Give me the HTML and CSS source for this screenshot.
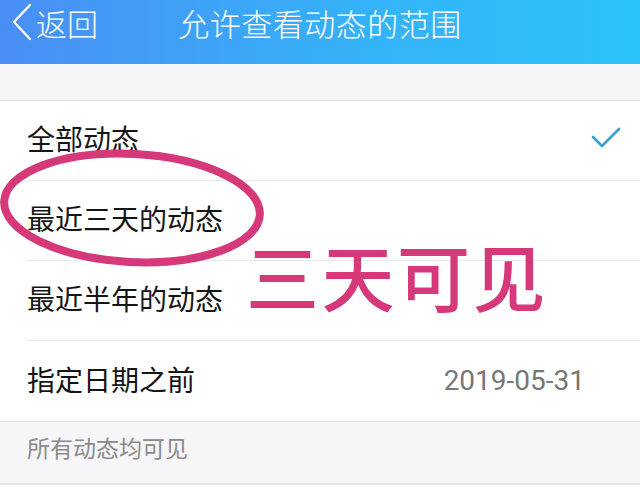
FILE: index.html
```html
<html>
  <head>
    <meta charset="UTF-8">
    <meta name="viewport" content="width=device-width, initial-scale=1">
    <title>允许查看动态的范围</title>
    <link rel="stylesheet" href="styles.css">
  </head>

  <body>
    <div class="nav-bar">
      <div class="nav-back">
        <svg class="nav-back-icon" width="22" height="38" viewBox="0 0 22 38">
          <polyline points="19,2 3,19 19,36" fill="none" stroke="white" stroke-width="2.4" stroke-linejoin="round" stroke-linecap="round"/>
        </svg>
        <span>返回</span>
      </div>
      <div class="nav-title">允许查看动态的范围</div>
    </div>

    <div class="gap"></div>

    <div class="option-list">
      <div class="option-row">
        <span class="option-label">全部动态</span>
        <svg class="option-check" width="32" height="24" viewBox="0 0 32 24">
          <polyline points="3,11 12,20 29,3" fill="none" stroke="#3a9fca" stroke-width="2.6" stroke-linejoin="round" stroke-linecap="round"/>
        </svg>
      </div>
      <div class="option-row">
        <span class="option-label">最近三天的动态</span>
      </div>
      <div class="option-row">
        <span class="option-label">最近半年的动态</span>
      </div>
      <div class="option-row option-row-last">
        <span class="option-label">指定日期之前</span>
        <span class="option-value">2019-05-31</span>
      </div>
    </div>

    <div class="note">所有动态均可见</div>

    <!-- annotation drawn over the screenshot -->
    <svg class="mark-circle" width="280" height="130" viewBox="0 0 280 130">
      <ellipse cx="134" cy="64" rx="128" ry="54" fill="none" stroke="#d6397a" stroke-width="8" transform="rotate(3 134 64)"/>
    </svg>
    <div class="mark-text">三天可见</div>
  </body>
</html>
```

FILE: styles.css
```css
body {
  margin: 0;
  width: 640px;
  height: 494px;
  overflow: hidden;
  position: relative;
  background-color: white;
  font-family: "Noto Sans CJK SC", "Noto Sans", sans-serif;
  color: #151515;
}

.nav-bar {
  height: 64px;
  position: relative;
  background: linear-gradient(to right, #4a8ef4, #34b4f8 60%, #2bc3f9);
  color: white;
  display: flex;
  align-items: flex-start;
}

.nav-back {
  display: flex;
  align-items: flex-start;
  padding-left: 11px;
  height: 46px;
  font-size: 31px;
  font-weight: 300;
}

.nav-back-icon {
  margin-top: 3px;
  margin-right: 3px;
}

.nav-back span {
  line-height: 45px;
}

.nav-title {
  position: absolute;
  left: 0;
  right: 0;
  top: 0;
  height: 46px;
  line-height: 45px;
  text-align: center;
  font-size: 31px;
  font-weight: 300;
  letter-spacing: 0.5px;
}

.gap {
  height: 36px;
  background-color: #f5f5f7;
  border-bottom: 1px solid #e3e3e5;
}

.option-list {
  padding-left: 27px;
}

.option-row {
  height: 79px;
  display: flex;
  align-items: center;
  border-bottom: 1px solid #e8e8e8;
}

.option-row-last {
  border-bottom: none;
  height: 80px;
}

.option-label {
  flex: 1;
  font-size: 28px;
  margin-top: -5px;
}

.option-check {
  margin-right: 18px;
  margin-top: -6px;
}

.option-value {
  font-family: Roboto, "Liberation Sans", sans-serif;
  font-size: 28px;
  color: #777;
  margin-right: 55px;
  margin-top: -2px;
}

.note {
  height: 61px;
  background-color: #f6f6f8;
  border-top: 1px solid #e3e3e5;
  border-bottom: 2px solid #e3e3e5;
  padding-left: 27px;
  font-size: 23px;
  color: #8a8a8a;
  line-height: 50px;
}

.mark-circle {
  position: absolute;
  left: -2px;
  top: 144px;
}

.mark-text {
  position: absolute;
  left: 246px;
  top: 224px;
  font-size: 73px;
  font-weight: 500;
  letter-spacing: 2.5px;
  color: #d6397a;
  line-height: 100px;
}
```
